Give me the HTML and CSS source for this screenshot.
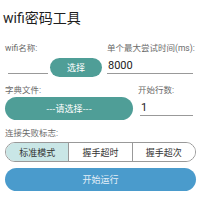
FILE: index.html
```html
<!DOCTYPE html>
<html lang="zh">
<head>
  <meta charset="UTF-8">
  <meta name="viewport" content="width=device-width, initial-scale=1.0">
  <title>wifi密码工具</title>
  <link rel="stylesheet" href="styles.css">
</head>
<body>
  <h1 class="title">wifi密码工具</h1>

  <div class="form-row row-wifi">
    <div class="field field-wifi">
      <p class="label">wifi名称:</p>
      <div class="pick-line">
        <input class="line-input short" type="text" value="">
        <button class="pill teal btn-pick">选择</button>
      </div>
    </div>
    <div class="field field-time">
      <p class="label">单个最大尝试时间(ms):</p>
      <input class="line-input" type="text" value="8000">
    </div>
  </div>

  <div class="form-row row-dict">
    <div class="field field-dict">
      <p class="label">字典文件:</p>
      <button class="pill teal btn-dict">---请选择---</button>
    </div>
    <div class="field field-start">
      <p class="label">开始行数:</p>
      <input class="line-input" type="text" value="1">
    </div>
  </div>

  <p class="label label-fail">连接失败标志:</p>
  <div class="segmented">
    <button class="seg active">标准模式</button>
    <button class="seg">握手超时</button>
    <button class="seg">握手超次</button>
  </div>

  <button class="pill blue btn-run">开始运行</button>
</body>
</html>
```

FILE: styles.css
```css
body {
  margin: 0;
  padding: 0 4px 0 5px;
  background: #fff;
  color: #222;
  font-family: Roboto, "Noto Sans CJK SC", sans-serif;
}
.title {
  margin: 9px 0 0 -2px;
  font-size: 14px;
  line-height: 18px;
  font-weight: normal;
  color: #1e1e1e;
}
.label {
  margin: 0;
  font-size: 8.5px;
  line-height: 10px;
  color: #6a6a6a;
}
.form-row {
  display: flex;
  gap: 5px;
}
.row-wifi {
  margin-top: 16px;
}
.field-wifi {
  width: 97px;
}
.field-time {
  flex: 1;
}
.pick-line {
  display: flex;
  align-items: flex-end;
  margin-top: 4px;
}
.line-input {
  display: block;
  box-sizing: border-box;
  width: 100%;
  height: 17px;
  margin: 0;
  padding: 0 1px;
  border: none;
  border-bottom: 1px solid #999;
  background: transparent;
  font-family: Roboto, sans-serif;
  font-size: 11px;
  color: #222;
  outline: none;
}
.line-input.short {
  width: 40px;
  margin: 0 2px 3px 3px;
}
.field-time .line-input {
  margin-top: 4px;
  width: 86px;
}
.pill {
  display: block;
  border: none;
  border-radius: 12px;
  color: #fff;
  font-family: "Noto Sans CJK SC", sans-serif;
  font-size: 9px;
  padding: 0;
}
.teal {
  background: #4f9e97;
}
.blue {
  background: #4a9bcc;
  color: #e4eef7;
}
.btn-pick {
  width: 52px;
  height: 19px;
}
.row-dict {
  margin-top: 8px;
}
.field-dict {
  width: 128px;
}
.field-start {
  flex: 1;
}
.btn-dict {
  width: 128px;
  height: 23px;
  margin-top: 2px;
}
.field-start .line-input {
  margin: 4px 0 0 2px;
  width: 53px;
}
.label-fail {
  margin-top: 8px;
}
.segmented {
  display: flex;
  margin-top: 4px;
  height: 18px;
  border: 1px solid #999;
  border-radius: 10px;
  overflow: hidden;
}
.seg {
  flex: 1;
  border: none;
  border-left: 1px solid #999;
  background: #fff;
  font-family: "Noto Sans CJK SC", sans-serif;
  font-size: 9px;
  color: #333;
  padding: 0;
}
.seg:first-child {
  border-left: none;
}
.seg.active {
  background: #c9e6e6;
}
.btn-run {
  width: 100%;
  height: 23px;
  margin-top: 6px;
}
```
